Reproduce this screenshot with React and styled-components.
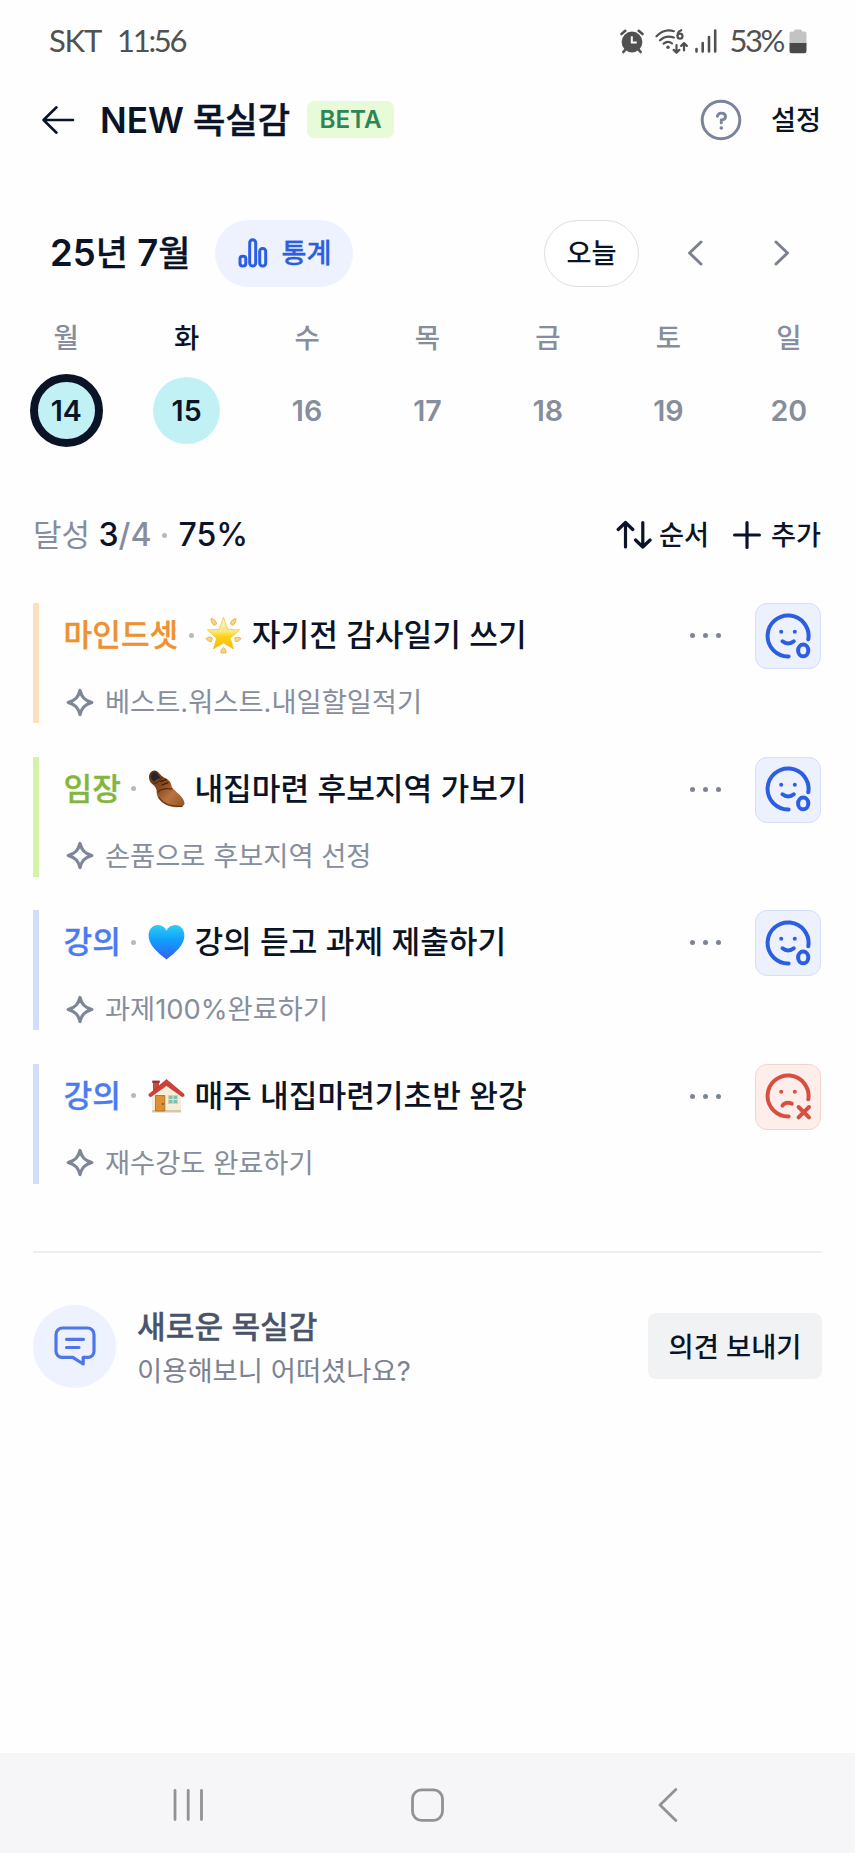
import React from 'react'
import styled, { createGlobalStyle } from 'styled-components'

const INK = '#0a1426'
const GRAY = '#868d9c'
const BLUE = '#2b5fe0'

const GlobalStyle = createGlobalStyle`
  * {
    box-sizing: border-box;
  }
  body {
    margin: 0;
    background: #fefefe;
    color: ${INK};
    font-family: Inter, 'Noto Sans CJK KR', sans-serif;
  }
  button {
    padding: 0;
    border: 0;
    background: none;
    color: inherit;
    font-family: inherit;
  }
  svg {
    display: block;
    flex: none;
  }
`

const Screen = styled.div`
  display: flex;
  flex-direction: column;
  width: 855px;
  height: 1853px;
  overflow: hidden;
  white-space: nowrap;
`

const StatusBar = styled.div`
  display: flex;
  align-items: center;
  justify-content: space-between;
  height: 82px;
  padding: 0 48px 0 49px;
  color: #515151;
  font-family: Lato, sans-serif;
  font-size: 31px;
  letter-spacing: -1.2px;
`

const Clock = styled.div`
  display: flex;
  gap: 16px;
  padding-bottom: 2px;
`

const Time = styled.span`
  letter-spacing: -2.3px;
`

const StatusIcons = styled.div`
  display: flex;
  align-items: center;
`

const WifiSlot = styled.div`
  margin: 0 6px 0 11px;
`

const Percent = styled.span`
  margin: 0 6px 0 11px;
  padding-bottom: 2px;
  letter-spacing: -2.4px;
`

const Header = styled.header`
  display: flex;
  align-items: center;
  height: 76px;
  padding: 0 34px 0 40px;
`

const Title = styled.h1`
  display: flex;
  align-items: center;
  gap: 9px;
  margin: 0 0 0 24px;
  font-size: 35.2px;
  font-weight: 500;
  line-height: 44px;
  -webkit-text-stroke: 0.5px;
  b {
    font-weight: 600;
    -webkit-text-stroke: 0;
  }
`

const Beta = styled.span`
  width: 87px;
  height: 37px;
  margin: 0 0 1px 17px;
  border-radius: 7px;
  background: #e9fad8;
  color: #2c8757;
  font-size: 24.2px;
  font-weight: 600;
  line-height: 38px;
  text-align: center;
`

const HeaderActions = styled.div`
  display: flex;
  align-items: center;
  gap: 29px;
  margin-left: auto;
`

const TextButton = styled.button`
  display: flex;
  align-items: center;
  gap: ${({ $gap }) => $gap || 0}px;
  padding-top: 2px;
  font-size: 27.2px;
  font-weight: 500;
  line-height: 40px;
  svg {
    margin-top: -2px;
  }
`

const MonthBar = styled.div`
  display: flex;
  align-items: center;
  height: 67px;
  margin-top: 62px;
  padding: 0 55px 0 50px;
`

const Month = styled.h2`
  width: 165px;
  margin: 0;
  padding-bottom: 1px;
  font-size: 35px;
  font-weight: 500;
  line-height: 44px;
  -webkit-text-stroke: 0.3px;
`

const Digits = styled.span`
  font-size: 36.5px;
  font-weight: 600;
  -webkit-text-stroke: 0;
`

const Pill = styled.button`
  display: flex;
  align-items: center;
  justify-content: center;
  gap: 13px;
  width: ${({ $width }) => $width}px;
  height: 67px;
  padding-left: ${({ $outlined }) => ($outlined ? 0 : 2)}px;
  border-radius: 34px;
  border: ${({ $outlined }) => ($outlined ? '1.5px solid #dedfe3' : '0')};
  background: ${({ $outlined }) => ($outlined ? '#fff' : '#eef2ff')};
  color: ${({ $outlined }) => ($outlined ? INK : BLUE)};
  font-size: 27.2px;
  font-weight: 500;
  line-height: 40px;
  -webkit-text-stroke: ${({ $outlined }) => ($outlined ? 0 : 0.3)}px;
`

const MonthNav = styled.div`
  display: flex;
  align-items: center;
  gap: 38px;
  margin-left: auto;
`

const Arrows = styled.div`
  display: flex;
  gap: 51px;
  padding-bottom: 1px;
`

const Week = styled.div`
  display: grid;
  grid-template-columns: repeat(7, 1fr);
  margin-top: 31px;
  padding: 0 6px;
`

const Day = styled.div`
  display: flex;
  flex-direction: column;
  align-items: center;
  gap: 16px;
  color: ${({ $active }) => ($active ? INK : GRAY)};
  font-size: 27.5px;
  font-weight: 500;
  line-height: 40px;
`

const DayNumber = styled.div`
  display: flex;
  align-items: center;
  justify-content: center;
  width: 73px;
  height: 73px;
  border: ${({ $selected }) => ($selected ? '8px solid ' + INK : '3.5px solid transparent')};
  border-radius: 50%;
  background: ${({ $done }) => ($done ? '#c1f1f5' : 'transparent')};
  background-clip: ${({ $selected }) => ($selected ? 'border-box' : 'padding-box')};
  color: ${({ $done }) => ($done ? INK : GRAY)};
  font-size: 28.6px;
  font-weight: 600;
`

const Summary = styled.div`
  display: flex;
  align-items: center;
  justify-content: space-between;
  height: 50px;
  margin-top: 63px;
  padding: 0 34px 0 33px;
`

const Achieved = styled.div`
  display: flex;
  align-items: center;
  color: ${GRAY};
  font-size: 31px;
  line-height: 40px;
`

const Score = styled.span`
  color: ${({ $muted }) => ($muted ? GRAY : INK)};
  font-size: 32px;
  font-weight: 500;
`

const Label = styled.span`
  margin-right: 8.5px;
`

const Dot = styled.i`
  width: 5px;
  height: 5px;
  margin: 0 11.5px 0 10.5px;
  border-radius: 50%;
  background: #b4b9c3;
`

const SummaryActions = styled.div`
  display: flex;
  gap: 24px;
`

const TaskList = styled.ul`
  display: flex;
  flex-direction: column;
  gap: 33.6px;
  margin: 43px 0 0;
  padding: 0 34px 0 32.5px;
  list-style: none;
`

const Task = styled.li`
  display: flex;
  align-items: flex-start;
  height: 120px;
`

const Bar = styled.div`
  width: 6px;
  height: 120px;
  background: ${({ $color }) => $color};
`

const TaskBody = styled.div`
  flex: 1;
  padding-left: 25px;
`

const TaskTitle = styled.div`
  display: flex;
  align-items: center;
  height: 64px;
  font-size: 31.2px;
  font-weight: 500;
  line-height: 44px;
`

const Category = styled.span`
  color: ${({ $color }) => $color};
  -webkit-text-stroke: 0.3px;
`

const TaskName = styled.span`
  margin-left: 9.5px;
`

const TaskNote = styled.div`
  display: flex;
  align-items: center;
  gap: 11px;
  margin-top: 16px;
  padding-left: 2.5px;
  color: ${GRAY};
  font-size: 27.3px;
  line-height: 40px;
  svg {
    margin-bottom: 2px;
  }
`

const More = styled.button`
  display: flex;
  gap: 8px;
  align-items: center;
  height: 65px;
  margin-right: 34.5px;
  span {
    width: 5px;
    height: 5px;
    border-radius: 50%;
    background: #7d8594;
  }
`

const MoodButton = styled.button`
  display: flex;
  align-items: center;
  justify-content: center;
  width: 66px;
  height: 66px;
  padding-top: 1px;
  border: 1.5px solid ${({ $done }) => ($done ? '#d5ddf7' : '#f7d3d0')};
  border-radius: 12px;
  background: ${({ $done }) => ($done ? '#edf1fe' : '#fdeeec')};
  color: ${({ $done }) => ($done ? BLUE : '#d94f3e')};
`

const Feedback = styled.section`
  display: flex;
  align-items: center;
  box-sizing: content-box;
  height: 84px;
  margin: 67px 33px 0;
  padding-top: 51.5px;
  border-top: 2px solid #efeff1;
`

const FeedbackIcon = styled.div`
  display: flex;
  align-items: center;
  justify-content: center;
  width: 83px;
  height: 83px;
  border-radius: 50%;
  background: #eef2ff;
`

const FeedbackText = styled.div`
  margin-left: 21px;
  padding-top: 6px;
  color: #7b8291;
  font-size: 27.4px;
  line-height: 44px;
  strong {
    display: block;
    color: #49536a;
    font-size: 31.2px;
    font-weight: 500;
    -webkit-text-stroke: 0.3px;
  }
`

const FeedbackButton = styled.button`
  width: 174px;
  height: 66px;
  margin-left: auto;
  padding-bottom: 3px;
  border-radius: 8px;
  background: #f1f2f4;
  font-size: 27.3px;
  font-weight: 500;
`

const SystemNav = styled.nav`
  display: flex;
  align-items: center;
  justify-content: space-between;
  height: 100px;
  margin-top: auto;
  padding: 3px 177px 0 173px;
  background: #f6f6f9;
`

const stroke = {
  fill: 'none',
  stroke: 'currentColor',
  strokeLinecap: 'round',
  strokeLinejoin: 'round',
}

function AlarmIcon() {
  return (
    <svg width="24" height="25" viewBox="0 0 24 25">
      <g {...stroke} strokeWidth="2.6">
        <path d="M1.5 5 5.3 1.8M18.7 1.8 22.5 5M5.4 20.6 3.4 23M18.6 20.6l2 2.4" />
      </g>
      <circle cx="12" cy="13" r="10.4" fill="currentColor" />
      <path d="M11.8 7.3v6.2h5" fill="none" stroke="#fefefe" strokeWidth="2" />
    </svg>
  )
}

function WifiIcon() {
  return (
    <svg width="33" height="26" viewBox="0 0 33 26">
      <g {...stroke} strokeWidth="2.2">
        <path d="M1.5 8.2C6.7 3 13.2 1.4 18.8 3.2" />
        <path d="M5 12.3c3.8-3.6 8.6-4.7 13.8-2.8" />
        <path d="M8.6 15.7c2.6-2.2 5.8-2.2 8.4-.4" />
        <path d="M21.5 17v7.5m-2.8-2.6 2.8 2.8 2.8-2.8M29 22.5v-7m-2.8 2.4 2.8-2.8 2.8 2.8" />
        <path d="M26.3 2.2c-2.3.8-3.7 2.7-3.7 5.2" />
        <circle cx="25" cy="8.2" r="2.5" />
      </g>
      <circle cx="13" cy="19.2" r="1.7" fill="currentColor" />
    </svg>
  )
}

function SignalIcon() {
  return (
    <svg width="24" height="26" viewBox="0 0 24 26" {...stroke} strokeWidth="2.6">
      <path d="M2.5 21v2.5M8.7 15v8.5M15 9v14.5M21.2 2.5v21" />
    </svg>
  )
}

function BatteryIcon() {
  return (
    <svg width="18" height="25" viewBox="0 0 18 25">
      <path d="M5 2.5V2A1.5 1.5 0 0 1 6.5.5h5A1.5 1.5 0 0 1 13 2v.5h2.500a2 2 0 0 1 2 2V14H.5V4.500a2 2 0 0 1 2-2z" fill="#c3c3c3" />
      <path d="M.5 14h17v8a2.300 2.300 0 0 1-2.300 2.300H2.800A2.300 2.300 0 0 1 .5 22z" fill="#494949" />
    </svg>
  )
}

function BackIcon() {
  return (
    <svg width="36" height="32" viewBox="0 0 36 32" {...stroke} strokeWidth="2.6">
      <path d="M16.5 3.3 3.5 16l13 12.7M3.5 16H33" />
    </svg>
  )
}

function HelpIcon() {
  return (
    <svg width="42" height="42" viewBox="0 0 42 42" {...stroke} stroke="#7b849a" strokeWidth="3">
      <circle cx="21" cy="21" r="18.8" />
      <path d="M17.4 17.3c.5-2.2 2-3.2 4-3.2 2.4 0 4.1 1.4 4.1 3.5 0 2.4-1.7 3.3-4.2 3.3v3" strokeWidth="2.9" />
      <circle cx="21.3" cy="29" r="1.8" fill="#7b849a" stroke="none" />
    </svg>
  )
}

function StatsIcon() {
  return (
    <svg width="30" height="31" viewBox="0 0 30 31" {...stroke} strokeWidth="3">
      <rect x="2" y="18.2" width="5.8" height="9.8" rx="2.6" />
      <rect x="11.7" y="1.8" width="6" height="26.2" rx="3" />
      <rect x="21.7" y="10.5" width="6" height="17.5" rx="2.8" />
    </svg>
  )
}

function Chevron({ right }) {
  return (
    <svg width="36" height="28" viewBox="0 0 36 28" {...stroke} stroke="#7b8192" strokeWidth="3">
      <path d={right ? 'M12 3l11.5 11L12 25' : 'M24 3 12.5 14 24 25'} />
    </svg>
  )
}

function SortIcon() {
  return (
    <svg width="36" height="30" viewBox="0 0 36 30" {...stroke} strokeWidth="3.2">
      <path d="M9.500 27V2.500M2.200 9.500l7.300-7 7.300 7M26.800 2.500V27M19.500 20l7.300 7 7.300-7" />
    </svg>
  )
}

function PlusIcon() {
  return (
    <svg width="28" height="28" viewBox="0 0 28 28" {...stroke} strokeWidth="3.2">
      <path d="M14 1.6v24.800M1.600 14h24.800" />
    </svg>
  )
}

function SparkleIcon() {
  return (
    <svg width="28" height="29" viewBox="0 0 28 29" {...stroke} stroke="#7d8596" strokeWidth="3.2">
      <path d="M14 2.500c1.800 6.800 4.600 9.900 11.800 12-7.200 2.100-10 5.200-11.800 12-1.800-6.800-4.600-9.900-11.800-12C9.400 12.400 12.200 9.300 14 2.500z" />
    </svg>
  )
}

function MoodIcon({ done }) {
  return (
    <svg width="48" height="48" viewBox="0 0 48 48" {...stroke} strokeWidth="4">
      <path d="M44.300 26.200A20.500 20.500 0 1 0 24.600 43.400" />
      <circle cx="17.200" cy="18.700" r="2" fill="currentColor" stroke="none" />
      <circle cx="30.800" cy="18.700" r="2" fill="currentColor" stroke="none" />
      {done ? (
        <>
          <path d="M18.500 28.300c3.400 2.800 7.900 2.800 11.300 0" />
          <ellipse cx="39.200" cy="37.400" rx="5.100" ry="5.900" />
        </>
      ) : (
        <>
          <path d="M18.500 32.600c1.900-2.700 5.500-3.400 9.300-1.900" />
          <path d="M34.600 34 45 44.400M45 34 34.600 44.400" />
        </>
      )}
    </svg>
  )
}

function MessageIcon() {
  return (
    <svg width="42" height="40" viewBox="0 0 42 40" {...stroke} stroke="#4d77e8" strokeWidth="3.2">
      <path d="M8.500 2h25a6.500 6.500 0 0 1 6.500 6.500v16.800a6 6 0 0 1-6 6h-4.800v6.700l-10.400-6.700H8A6 6 0 0 1 2 25.300V8.500A6.500 6.500 0 0 1 8.500 2z" />
      <path d="M12.500 13.300h17M12.500 21.500h12.500" />
    </svg>
  )
}

function StarEmoji() {
  return (
    <svg width="37" height="38" viewBox="0 0 37 38">
      <defs>
        <linearGradient id="star" x1="0" y1="0" x2="0" y2="1">
          <stop offset="0" stopColor="#fdf3c4" />
          <stop offset="0.4" stopColor="#fdeb94" />
          <stop offset="0.62" stopColor="#fcd312" />
          <stop offset="1" stopColor="#f9b60c" />
        </linearGradient>
      </defs>
      <g fill="#f6d77c" stroke="#dda93c" strokeWidth="0.8" strokeLinejoin="round">
        <path d="M6 2.500c3 .5 5 2 5.500 5.500l-2.300 1.500C7 7.500 6 5.500 6 2.500zM31 2.500c-3 .5-5 2-5.500 5.500l2.300 1.500c2.200-2 3.200-4 3.200-7z" />
        <path d="M1 22.500c2-1.500 4-1.700 6.300-.3l-.8 3.300c-2.300.2-4-.7-5.500-3zM36 22.500c-2-1.500-4-1.700-6.300-.3l.8 3.300c2.300.2 4-.7 5.500-3z" />
        <path d="M18.500 31.500c2 1.500 2.800 3.500 2.400 5.500h-4.800c-.4-2 .4-4 2.400-5.500z" />
      </g>
      <path d="M18.500 1.200 22.700 13.200l11.900.8-9.300 8.200 3.300 10.800-10.100-6-10.100 6 3.300-10.800L2.400 14l11.900-.8z" fill="url(#star)" stroke="#efc030" strokeWidth="0.7" strokeLinejoin="round" />
    </svg>
  )
}

function ShoeEmoji() {
  return (
    <svg width="37" height="38" viewBox="0 0 37 38">
      <defs>
        <linearGradient id="shoe" x1="0" y1="0" x2="1" y2="1">
          <stop offset="0" stopColor="#5e2d0e" />
          <stop offset="0.400" stopColor="#8a4c20" />
          <stop offset="0.650" stopColor="#b97440" />
          <stop offset="1" stopColor="#925226" />
        </linearGradient>
      </defs>
      <path d="M1 7.500C.8 3.800 3.500.6 6.500.6c2.600 0 3.800 1.700 6.500 4.600 2.500 2.600 7 3.300 9.300 7.100 1.500 2.600.6 4.200 3.300 6.900 4.400 4.200 10.400 8.400 10.900 14.100.2 2.600-3.500 4.200-8.500 3.900-8-.5-16-4.800-18.500-11-1.400-3.500.2-7-3.500-10.700C3.200 13.300 1.300 11.500 1 7.500z" fill="url(#shoe)" />
      <path d="M3 7C3 3.800 4.700 1.800 6.800 1.900c2.200.2 4 3 5.600 6.200-2.500.5-4.500 1.600-6.200 3.500C4.400 10.800 3.100 9.200 3 7z" fill="#26252d" />
      <path d="M5.500 13.500c2.400 0 6.300-2.700 8.700-6.800M9.500 22.500c2.500-3 8-4.500 15-3.500" fill="none" stroke="#5b2c0d" strokeWidth="1.200" />
      <path d="M12.500 11.700l5.500-2M14 15l6-2.300" stroke="#3f1d09" strokeWidth="1.300" strokeLinecap="round" />
      <path d="M10.500 27c4 6.500 13 10 24 9.300" fill="none" stroke="#623010" strokeWidth="1.300" />
    </svg>
  )
}

function HeartEmoji() {
  return (
    <svg width="37" height="38" viewBox="0 0 37 38">
      <defs>
        <linearGradient id="heart" x1="0" y1="0" x2="0" y2="1">
          <stop offset="0" stopColor="#2ccdf5" />
          <stop offset="0.45" stopColor="#119dfb" />
          <stop offset="1" stopColor="#3560f6" />
        </linearGradient>
      </defs>
      <path d="M18.500 36.500C9.500 29.500.6 22 .6 12.500.6 6.200 4.600 2 9.800 2c3.900 0 7 2.100 8.700 5.400C20.200 4.100 23.300 2 27.200 2c5.200 0 9.200 4.200 9.200 10.500 0 9.500-8.900 17-17.900 24z" fill="url(#heart)" />
    </svg>
  )
}

function HouseEmoji() {
  return (
    <svg width="37" height="38" viewBox="0 0 37 38">
      <path d="M5 4.500h6v9H5z" fill="#c94b40" />
      <path d="M4.200 3.600h7.600v2.200H4.200z" fill="#9c3028" />
      <path d="M4 18 18.500 5.500 33 18v16.500H4z" fill="#f5ecd9" />
      <path d="M4 33h29v2.500H4z" fill="#d3c8ab" />
      <path d="M18.500 2.500 1 17.200c-.8.8.8 3.200 2 2.400L18.500 8.500l15.500 11.100c1.200.8 2.800-1.600 2-2.400z" fill="#d0403a" stroke="#a93630" strokeWidth="0.7" />
      <path d="M7.500 18.500h9.300V34H7.500z" fill="#dc9234" stroke="#a56a20" strokeWidth="0.8" />
      <circle cx="14.800" cy="27" r="0.9" fill="#7d4d12" />
      <path d="M20.500 18.500h9v8h-9z" fill="#79bfae" stroke="#d9cfae" strokeWidth="1.2" />
      <path d="M25 18.500v8M20.500 22.500h9" stroke="#e9e0c4" strokeWidth="1.2" />
    </svg>
  )
}

const days = [
  { label: '월', number: 14, done: true, selected: true },
  { label: '화', number: 15, done: true, active: true },
  { label: '수', number: 16 },
  { label: '목', number: 17 },
  { label: '금', number: 18 },
  { label: '토', number: 19 },
  { label: '일', number: 20 },
]

const tasks = [
  { category: '마인드셋', color: '#ee9130', bar: '#fce0bd', Emoji: StarEmoji, name: '자기전 감사일기 쓰기', note: '베스트.워스트.내일할일적기', done: true },
  { category: '임장', color: '#83b63c', bar: '#d5f2a9', Emoji: ShoeEmoji, name: '내집마련 후보지역 가보기', note: '손품으로 후보지역 선정', done: true },
  { category: '강의', color: '#4a7cf0', bar: '#d3dcfa', Emoji: HeartEmoji, name: '강의 듣고 과제 제출하기', note: '과제100%완료하기', done: true },
  { category: '강의', color: '#4a7cf0', bar: '#d3dcfa', Emoji: HouseEmoji, name: '매주 내집마련기초반 완강', note: '재수강도 완료하기', done: false },
]

export default function App() {
  return (
    <>
      <GlobalStyle />
      <Screen>
        <StatusBar>
          <Clock>
            <span>SKT</span>
            <Time>11:56</Time>
          </Clock>
          <StatusIcons>
            <AlarmIcon />
            <WifiSlot>
              <WifiIcon />
            </WifiSlot>
            <SignalIcon />
            <Percent>53%</Percent>
            <BatteryIcon />
          </StatusIcons>
        </StatusBar>
        <Header>
          <BackIcon />
          <Title>
            <b>NEW</b>
            <span>목실감</span>
          </Title>
          <Beta>BETA</Beta>
          <HeaderActions>
            <HelpIcon />
            <TextButton>설정</TextButton>
          </HeaderActions>
        </Header>

        <MonthBar>
          <Month>
            <Digits>25</Digits>년 <Digits>7</Digits>월
          </Month>
          <Pill $width={138}>
            <StatsIcon />
            통계
          </Pill>
          <MonthNav>
            <Pill $width={95} $outlined>오늘</Pill>
            <Arrows>
              <Chevron />
              <Chevron right />
            </Arrows>
          </MonthNav>
        </MonthBar>

        <Week>
          {days.map((day) => (
            <Day key={day.number} $active={day.active}>
              {day.label}
              <DayNumber $done={day.done} $selected={day.selected}>{day.number}</DayNumber>
            </Day>
          ))}
        </Week>

        <Summary>
          <Achieved>
            <Label>달성</Label>
            <Score>3</Score>
            <Score $muted>/4</Score>
            <Dot />
            <Score>75%</Score>
          </Achieved>
          <SummaryActions>
            <TextButton $gap={7}><SortIcon />순서</TextButton>
            <TextButton $gap={10}><PlusIcon />추가</TextButton>
          </SummaryActions>
        </Summary>

        <TaskList>
          {tasks.map(({ category, color, bar, Emoji, name, note, done }) => (
            <Task key={name}>
              <Bar $color={bar} />
              <TaskBody>
                <TaskTitle>
                  <Category $color={color}>{category}</Category>
                  <Dot />
                  <Emoji />
                  <TaskName>{name}</TaskName>
                </TaskTitle>
                <TaskNote>
                  <SparkleIcon />
                  {note}
                </TaskNote>
              </TaskBody>
              <More><span /><span /><span /></More>
              <MoodButton $done={done}>
                <MoodIcon done={done} />
              </MoodButton>
            </Task>
          ))}
        </TaskList>

        <Feedback>
          <FeedbackIcon>
            <MessageIcon />
          </FeedbackIcon>
          <FeedbackText>
            <strong>새로운 목실감</strong>
            이용해보니 어떠셨나요?
          </FeedbackText>
          <FeedbackButton>의견 보내기</FeedbackButton>
        </Feedback>

        <SystemNav>
          <svg width="31" height="34" viewBox="0 0 31 34" {...stroke} stroke="#929292" strokeWidth="2.8">
            <path d="M2 2.500v29M15.200 2.500v29M28.500 2.500v29" />
          </svg>
          <svg width="33" height="34" viewBox="0 0 33 34" {...stroke} stroke="#929292" strokeWidth="2.8">
            <rect x="1.500" y="1.800" width="30" height="30.500" rx="9" />
          </svg>
          <svg width="27" height="34" viewBox="-7 0 27 34" {...stroke} stroke="#929292" strokeWidth="2.8">
            <path d="M17.800 1.500 2 17l15.800 15.500" />
          </svg>
        </SystemNav>
      </Screen>
    </>
  )
}
